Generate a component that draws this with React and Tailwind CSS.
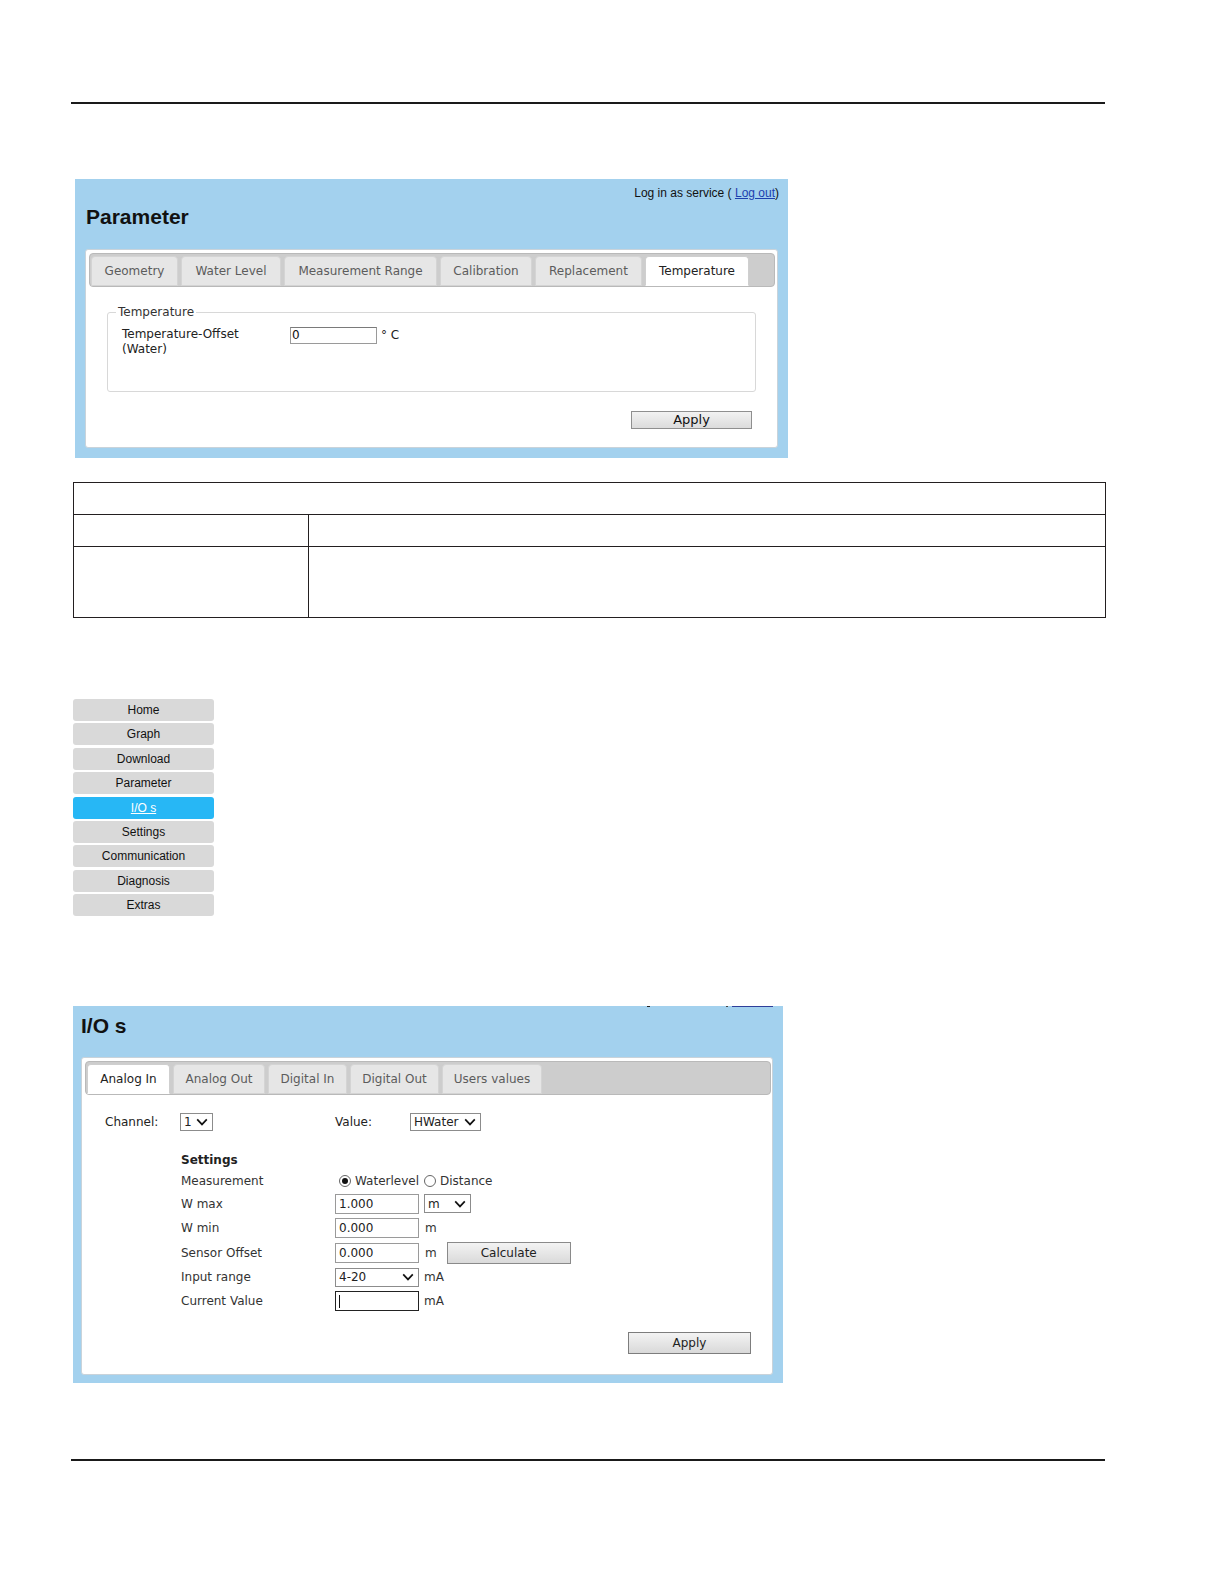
import React from "react";

const dv = { fontFamily: '"DejaVu Sans", Verdana, sans-serif' };
const ar = { fontFamily: '"Liberation Sans", Arial, sans-serif' };

function Chevron({ w = 12 }) {
  return (
    <svg width={w} height="8" viewBox="0 0 12 8" className="shrink-0">
      <path d="M1.2 1.4 L6 6.4 L10.8 1.4" stroke="#111" strokeWidth="1.7" fill="none" />
    </svg>
  );
}

function Tab({ label, w, active }) {
  return (
    <div
      className={
        "h-[30px] flex items-center justify-center rounded-t-[4px] border text-[12px] " +
        (active
          ? "bg-white border-[#cfcfcf] border-b-white text-[#222]"
          : "bg-[#e6e6e6] border-[#d4d4d4] text-[#5c5c5c]")
      }
      style={{ width: w }}
    >
      {label}
    </div>
  );
}

function TabBar({ tabs, w }) {
  return (
    <div
      className="h-[34px] bg-[#cdcdcd] border border-[#b9b9b9] rounded-[4px] flex items-end gap-[3px] pl-[1px]"
      style={{ width: w }}
    >
      {tabs.map((t) => (
        <Tab key={t[0]} label={t[0]} w={t[1]} active={t[2]} />
      ))}
    </div>
  );
}

function Screenshot1() {
  return (
    <div className="ml-[4px] mt-[75px] w-[713px] h-[279px] bg-[#a3d1ee] pl-[10px] pt-[7px]" style={dv}>
      <div className="flex justify-end pr-[9px] h-[15px] text-[12px] leading-[15px] text-[#111]" style={ar}>
        <span>
          Log in as service ( <span className="underline text-[#1d3fae]">Log out</span>)
        </span>
      </div>
      <div className="mt-[4px] pl-[1px] text-[21px] leading-[24px] font-bold text-[#111]" style={ar}>
        Parameter
      </div>
      <div className="mt-[20px] w-[693px] h-[199px] bg-white border border-[#c9d3da] rounded-[3px] pt-[3px] pl-[3px]">
        <TabBar
          w={686}
          tabs={[
            ["Geometry", 87],
            ["Water Level", 100],
            ["Measurement Range", 153],
            ["Calibration", 92],
            ["Replacement", 107],
            ["Temperature", 104, true],
          ]}
        />
        <div className="px-[18px] pr-[21px]">
          <fieldset className="mt-[18px] w-[649px] h-[87px] border border-[#d8d8d8] rounded-[3px] px-[14px]">
            <legend className="ml-[-6px] px-[2px] text-[12px] leading-[15px] text-[#333]">Temperature</legend>
            <div className="flex items-start mt-[7px]">
              <div className="w-[168px] text-[12px] leading-[15px] text-[#222]">
                Temperature-Offset
                <br />
                (Water)
              </div>
              <div className="h-[17px] w-[87px] border border-[#9a9a9a] border-t-[#7a7a7a] text-[12px] leading-[15px] pl-[1px] text-[#111]">
                0
              </div>
              <span className="ml-[4px] text-[12px] leading-[17px] text-[#222]">° C</span>
            </div>
          </fieldset>
          <div className="flex justify-end pr-[4px] mt-[19px]">
            <div className="w-[121px] h-[18px] border border-[#8f8f8f] bg-gradient-to-b from-[#f2f2f2] to-[#dcdcdc] flex items-center justify-center text-[13px] text-[#111]">
              Apply
            </div>
          </div>
        </div>
      </div>
    </div>
  );
}

function DocTable() {
  return (
    <div className="ml-[2px] mt-[24px] w-[1033px] border border-[#231f20]">
      <div className="h-[32px] border-b border-[#231f20]" />
      <div className="h-[32px] flex border-b border-[#231f20]">
        <div className="w-[235px] border-r border-[#231f20]" />
        <div className="flex-1" />
      </div>
      <div className="h-[70px] flex">
        <div className="w-[235px] border-r border-[#231f20]" />
        <div className="flex-1" />
      </div>
    </div>
  );
}

function Nav() {
  const items = ["Home", "Graph", "Download", "Parameter", "I/O s", "Settings", "Communication", "Diagnosis", "Extras"];
  return (
    <div className="ml-[2px] mt-[81px] w-[141px] flex flex-col gap-[2.4px]" style={ar}>
      {items.map((it) =>
        it === "I/O s" ? (
          <div key={it} className="h-[22px] rounded-[3px] bg-[#27b7f5] flex items-center justify-center text-[12px] text-white underline">
            {it}
          </div>
        ) : (
          <div key={it} className="h-[22px] rounded-[3px] bg-[#d9d9d9] flex items-center justify-center text-[12px] text-[#111]">
            {it}
          </div>
        )
      )}
    </div>
  );
}

function Select({ w, value, h = 18 }) {
  return (
    <div
      className="border border-[#8c8c8c] bg-white flex items-center justify-between pl-[3px] pr-[4px] text-[12px] text-[#222]"
      style={{ width: w, height: h }}
    >
      <span>{value}</span>
      <Chevron />
    </div>
  );
}

function Input({ value, focused }) {
  return (
    <div
      className={
        "w-[84px] h-[20px] bg-white flex items-center pl-[3px] text-[12px] text-[#222] border " +
        (focused ? "border-[#222]" : "border-[#9a9a9a]")
      }
    >
      {focused ? <span className="w-[1px] h-[13px] bg-[#111]" /> : value}
    </div>
  );
}

function Radio({ checked }) {
  return (
    <span className="w-[12px] h-[12px] rounded-full border border-[#666] bg-white flex items-center justify-center shrink-0">
      {checked && <span className="w-[6px] h-[6px] rounded-full bg-[#111]" />}
    </span>
  );
}

function Row({ label, h, children }) {
  return (
    <div className="flex items-center" style={{ height: h }}>
      <div className="w-[154px] text-[12px] text-[#333]">{label}</div>
      <div className="flex items-center">{children}</div>
    </div>
  );
}

function Screenshot2() {
  return (
    <div className="ml-[2px] mt-[90px] w-[710px] h-[377px] bg-[#a3d1ee] pl-[8px]" style={dv}>
      <div className="h-[2px] relative">
        <span className="absolute left-[566px] top-0 w-[3px] h-[1px] bg-[#222]" />
        <span className="absolute left-[645px] top-0 w-[2px] h-[1px] bg-[#444]" />
        <span className="absolute left-[651px] top-0 w-[41px] h-[1px] bg-[#2f3f9a]" />
      </div>
      <div className="mt-[6px] text-[21px] leading-[24px] font-bold text-[#111]" style={ar}>
        I/O s
      </div>
      <div className="mt-[19px] w-[692px] h-[318px] bg-white border border-[#c9d3da] rounded-[3px] pt-[3px] pl-[3px]">
        <TabBar
          w={686}
          tabs={[
            ["Analog In", 83, true],
            ["Analog Out", 92],
            ["Digital In", 79],
            ["Digital Out", 89],
            ["Users values", 100],
          ]}
        />
        <div className="pl-[20px]">
          <div className="mt-[17px] h-[20px] flex items-center text-[12px] text-[#222]">
            <div className="w-[75px]">Channel:</div>
            <div className="w-[155px]">
              <Select w={33} value="1" />
            </div>
            <div className="w-[75px]">Value:</div>
            <Select w={71} value="HWater" />
          </div>
          <div className="pl-[76px] mt-[18px]">
            <div className="h-[20px] flex items-center text-[12px] font-bold text-[#222]">Settings</div>
            <Row label="Measurement" h={22}>
              <span className="ml-[4px]">
                <Radio checked />
              </span>
              <span className="ml-[4px] text-[12px] text-[#333]">Waterlevel</span>
              <span className="ml-[5px]">
                <Radio />
              </span>
              <span className="ml-[4px] text-[12px] text-[#333]">Distance</span>
            </Row>
            <Row label="W max" h={23}>
              <Input value="1.000" />
              <span className="ml-[5px]">
                <Select w={47} value="m" h={19} />
              </span>
            </Row>
            <Row label="W min" h={25}>
              <Input value="0.000" />
              <span className="ml-[6px] text-[12px] text-[#333]">m</span>
            </Row>
            <Row label="Sensor Offset" h={25}>
              <Input value="0.000" />
              <span className="ml-[6px] text-[12px] text-[#333]">m</span>
              <div className="ml-[10px] w-[124px] h-[22px] border border-[#8a8a8a] bg-gradient-to-b from-[#f3f3f3] to-[#dadada] flex items-center justify-center text-[12px] text-[#222]">
                Calculate
              </div>
            </Row>
            <Row label="Input range" h={24}>
              <Select w={84} value="4-20" h={19} />
              <span className="ml-[5px] text-[12px] text-[#333]">mA</span>
            </Row>
            <Row label="Current Value" h={24}>
              <Input focused />
              <span className="ml-[5px] text-[12px] text-[#333]">mA</span>
            </Row>
          </div>
          <div className="flex justify-end pr-[21px] mt-[19px]">
            <div className="w-[123px] h-[22px] border border-[#7d7d7d] bg-gradient-to-b from-[#f3f3f3] to-[#d9d9d9] flex items-center justify-center text-[12px] text-[#222]">
              Apply
            </div>
          </div>
        </div>
      </div>
    </div>
  );
}

export default function App() {
  return (
    <div className="w-[1224px] min-h-[1584px] bg-white">
      <div className="pt-[102px] px-[71px]">
        <div className="w-[1034px] h-[2px] bg-[#1a1a1a]" />
        <Screenshot1 />
        <DocTable />
        <Nav />
        <Screenshot2 />
        <div className="mt-[76px] w-[1034px] h-[2px] bg-[#1a1a1a]" />
      </div>
    </div>
  );
}
